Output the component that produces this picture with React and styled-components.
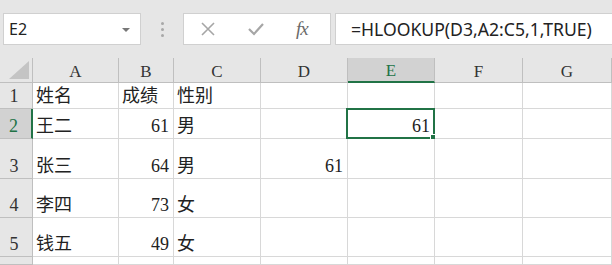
import React from 'react'
import styled, { createGlobalStyle } from 'styled-components'

const GlobalStyle = createGlobalStyle`
    html, body {
        margin: 0;
        padding: 0;
        background: #fff;
        overflow: hidden;
    }
`

const GREEN = '#217346'
const GRID = '#d8d8d8'
const HEAD_LINE = '#bfbfbf'

const Page = styled.div`
    width: 612px;
    height: 265px;
    display: flex;
    flex-direction: column;
    background: #fff;
`

const Toolbar = styled.div`
    height: 58px;
    box-sizing: border-box;
    padding: 13px 0 13px 3px;
    background: #e6e6e6;
    display: flex;
    align-items: stretch;
`

const NameBox = styled.div`
    width: 138px;
    box-sizing: border-box;
    background: #fff;
    border: 1px solid #d0d0d0;
    display: flex;
    align-items: center;
    justify-content: space-between;
    padding: 0 10px 0 5px;
    font-family: "Noto Sans", "Liberation Sans", sans-serif;
    font-size: 16px;
    color: #222;
`

const Caret = styled.span`
    width: 0;
    height: 0;
    border-left: 4px solid transparent;
    border-right: 4px solid transparent;
    border-top: 4px solid #777;
    margin-top: 2px;
`

const Grip = styled.div`
    width: 42px;
    display: flex;
    flex-direction: column;
    align-items: center;
    justify-content: center;
    gap: 3px;
    span {
        width: 3px;
        height: 3px;
        border-radius: 50%;
        background: #a8a8a8;
    }
`

const IconBox = styled.div`
    width: 148px;
    box-sizing: border-box;
    background: #fff;
    border: 1px solid #d0d0d0;
    display: flex;
    align-items: center;
    gap: 31px;
    padding-left: 16px;
`

const Fx = styled.span`
    font-family: "Liberation Serif", "DejaVu Serif", serif;
    font-style: italic;
    font-size: 19px;
    color: #6a6a6a;
    letter-spacing: -1px;
`

const FormulaInput = styled.div`
    flex: 1;
    margin-left: 4px;
    box-sizing: border-box;
    background: #fff;
    border: 1px solid #d0d0d0;
    border-right: none;
    display: flex;
    align-items: center;
    padding-left: 15px;
    font-family: "Noto Sans", "Liberation Sans", sans-serif;
    font-size: 17.6px;
    color: #222;
`

const Sheet = styled.div`
    flex: 1;
    display: grid;
    grid-template-columns: 33px 86px 55px 87px 87px 87px 88px 1fr;
    grid-template-rows: 25px 26px 30px 40px 39px 39px 1fr;
`

const Corner = styled.div`
    background: #e6e6e6;
    border-right: 1px solid ${HEAD_LINE};
    border-bottom: 1px solid ${HEAD_LINE};
    display: flex;
    align-items: flex-end;
    justify-content: flex-end;
    padding: 0 3px 3px 0;
`

const ColHead = styled.div`
    background: ${p => (p.$active ? '#d2d2d2' : '#e6e6e6')};
    border-right: 1px solid ${HEAD_LINE};
    border-bottom: ${p => (p.$active ? `2px solid ${GREEN}` : `1px solid ${HEAD_LINE}`)};
    display: flex;
    align-items: center;
    justify-content: center;
    padding-top: 3px;
    font-family: "Liberation Serif", "DejaVu Serif", serif;
    font-size: 17px;
    color: ${p => (p.$active ? GREEN : '#333')};
`

const RowHead = styled.div`
    background: ${p => (p.$active ? '#d2d2d2' : '#e6e6e6')};
    border-right: ${p => (p.$active ? `2px solid ${GREEN}` : `1px solid ${HEAD_LINE}`)};
    border-bottom: 1px solid ${HEAD_LINE};
    display: flex;
    align-items: flex-end;
    justify-content: center;
    padding: 0 4px 1px 0;
    line-height: 22px;
    font-family: "Liberation Serif", "DejaVu Serif", serif;
    font-size: 18px;
    color: ${p => (p.$active ? GREEN : '#333')};
`

const Cell = styled.div`
    position: relative;
    background: #fff;
    border-right: 1px solid ${GRID};
    border-bottom: 1px solid ${GRID};
    display: flex;
    align-items: flex-end;
    justify-content: ${p => (p.$num ? 'flex-end' : 'flex-start')};
    padding: 0 4px 1px 3px;
    line-height: 22px;
    white-space: nowrap;
    font-family: "Liberation Serif", "Noto Sans CJK SC", serif;
    font-size: 18px;
    color: #222;
`

const Selection = styled.div`
    position: absolute;
    left: -2px;
    top: -1px;
    right: -1px;
    bottom: -1px;
    border: 2px solid ${GREEN};
    pointer-events: none;
`

const FillHandle = styled.div`
    position: absolute;
    right: -4px;
    bottom: -4px;
    width: 5px;
    height: 5px;
    background: ${GREEN};
    border: 1px solid #fff;
`

const columns = ['A', 'B', 'C', 'D', 'E', 'F', 'G']

// row 6 only shows its top edge, so its label stays out of view
const rows = [
    { n: 1, label: '1', cells: ['姓名', '成绩', '性别', '', '', '', ''] },
    { n: 2, label: '2', cells: ['王二', '61', '男', '', '61', '', ''] },
    { n: 3, label: '3', cells: ['张三', '64', '男', '61', '', '', ''] },
    { n: 4, label: '4', cells: ['李四', '73', '女', '', '', '', ''] },
    { n: 5, label: '5', cells: ['钱五', '49', '女', '', '', '', ''] },
    { n: 6, label: '', cells: ['', '', '', '', '', '', ''] },
]

const CrossIcon = () => (
    <svg width="16" height="16" viewBox="0 0 16 16">
        <path d="M2 2 L14 14 M14 2 L2 14" stroke="#a6a6a6" strokeWidth="1.6" fill="none" />
    </svg>
)

const CheckIcon = () => (
    <svg width="18" height="16" viewBox="0 0 18 16">
        <path d="M2 8 L7 13 L16 3" stroke="#a6a6a6" strokeWidth="2.2" fill="none" />
    </svg>
)

const CornerTriangle = () => (
    <svg width="20" height="18" viewBox="0 0 20 18">
        <polygon points="20,0 20,18 0,18" fill="#c4c4c4" />
    </svg>
)

export default function App() {
    return (
        <Page>
            <GlobalStyle />
            <Toolbar>
                <NameBox>
                    E2
                    <Caret />
                </NameBox>
                <Grip>
                    <span />
                    <span />
                    <span />
                </Grip>
                <IconBox>
                    <CrossIcon />
                    <CheckIcon />
                    <Fx>fx</Fx>
                </IconBox>
                <FormulaInput>=HLOOKUP(D3,A2:C5,1,TRUE)</FormulaInput>
            </Toolbar>
            <Sheet>
                <Corner>
                    <CornerTriangle />
                </Corner>
                {columns.map(c => (
                    <ColHead key={c} $active={c === 'E'}>{c}</ColHead>
                ))}
                {rows.map(r => (
                    <React.Fragment key={r.n}>
                        <RowHead $active={r.n === 2}>{r.label}</RowHead>
                        {r.cells.map((v, i) => {
                            const selected = r.n === 2 && i === 4
                            return (
                                <Cell key={i} $num={/^\d+$/.test(v)}>
                                    {v}
                                    {selected && (
                                        <Selection>
                                            <FillHandle />
                                        </Selection>
                                    )}
                                </Cell>
                            )
                        })}
                    </React.Fragment>
                ))}
            </Sheet>
        </Page>
    )
}
